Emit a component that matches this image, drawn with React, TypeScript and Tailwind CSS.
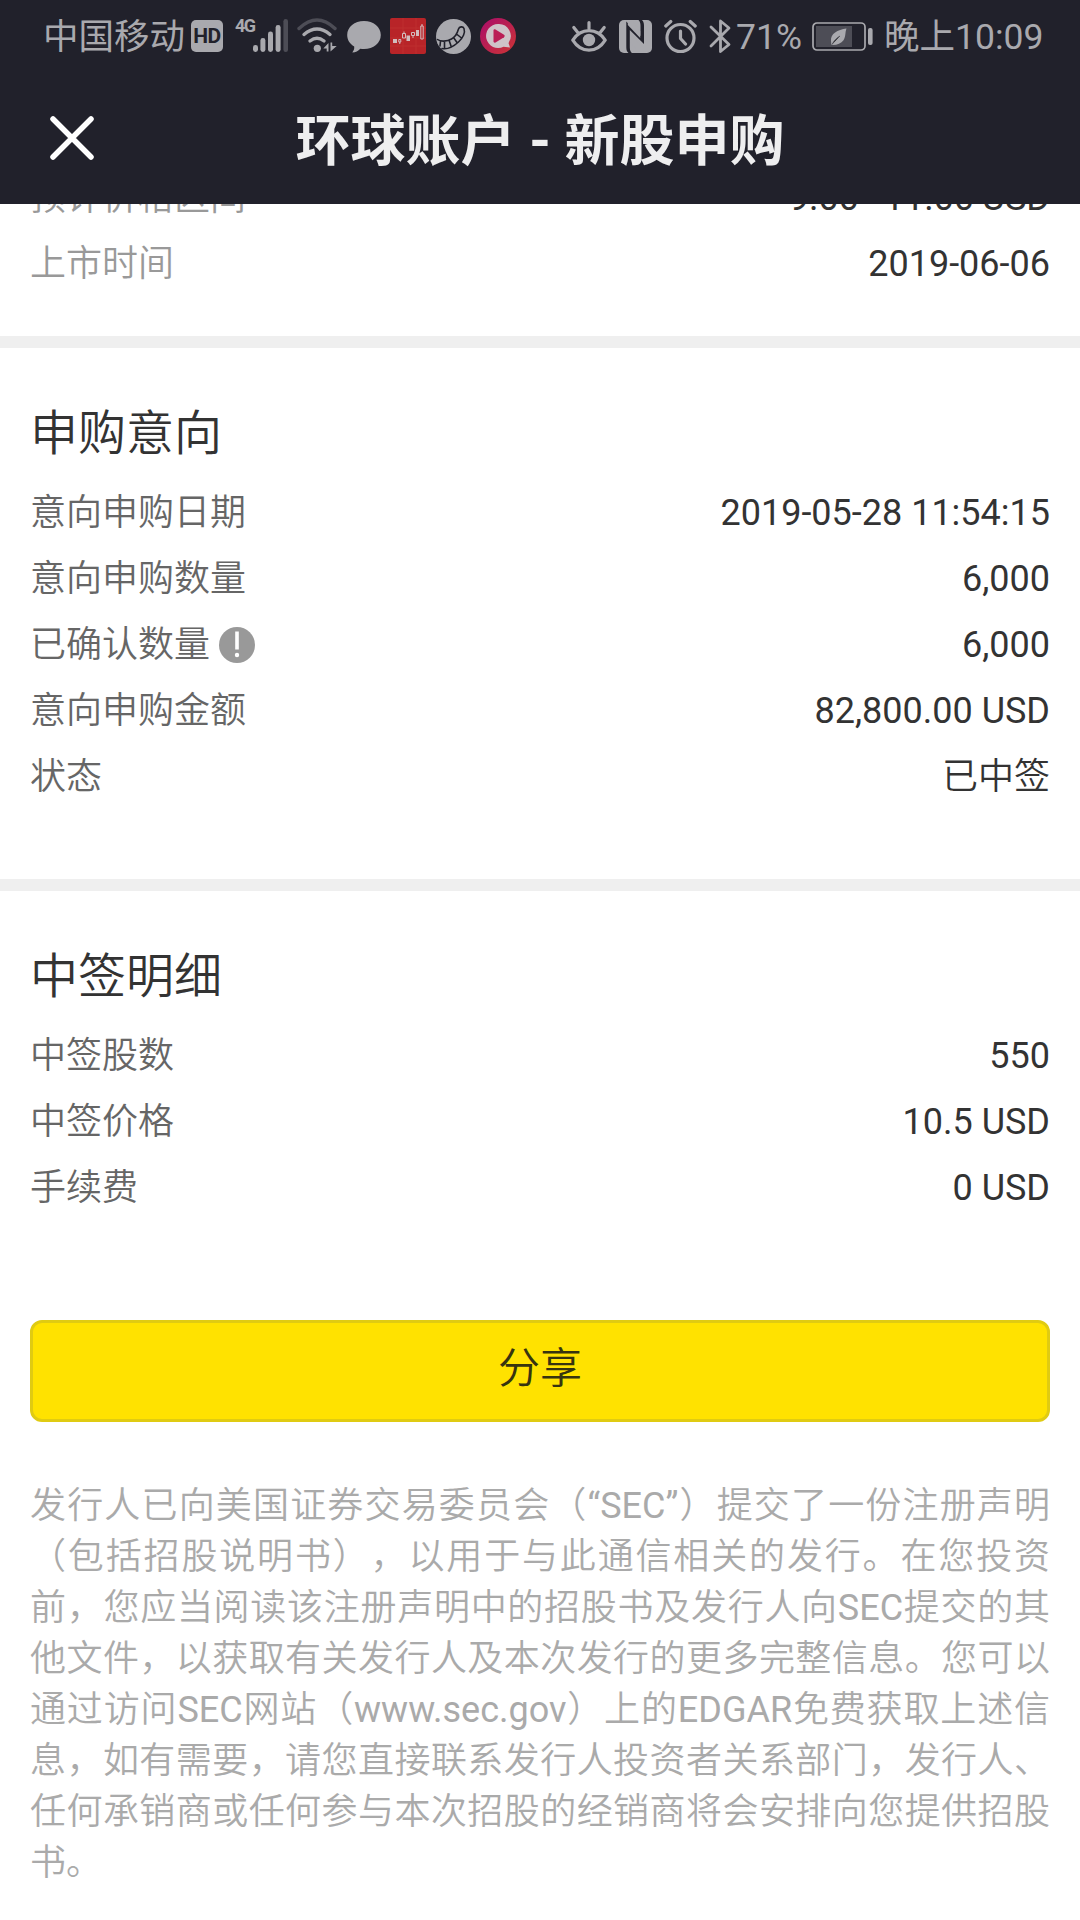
import { clsx } from "clsx";
import type { ReactNode } from "react";

// ── Status bar icons ──────────────────────────────────────────────
function HdIcon() {
  return (
    <div className="ml-1 flex h-8 w-8 items-center justify-center rounded-[5px] bg-[#a9a9ae] text-[21px] leading-none font-bold tracking-[-0.5px] text-[#21212b]">
      HD
    </div>
  );
}

function SignalIcon() {
  return (
    <svg className="h-9 w-[36px]" viewBox="0 0 36 36" fill="#a9a9ae">
      <rect x="0" y="27" width="5" height="7" rx="2.4" />
      <rect x="7.4" y="20" width="5" height="14" rx="2.4" />
      <rect x="15" y="13.5" width="5" height="20.5" rx="2.4" />
      <rect x="22.6" y="7" width="5" height="27" rx="2.4" />
      <rect x="30.4" y="1" width="4.6" height="33" rx="2.3" fill="#4d4d56" />
    </svg>
  );
}

function WifiIcon() {
  return (
    <svg className="ml-2 h-9 w-[40px]" viewBox="0 0 40 36" fill="none" strokeWidth="3.4" strokeLinecap="round">
      <path d="M2 10.5Q20 -6.500 38 10.500" stroke="#4d4d56" />
      <path d="M7 16.500Q20 5.500 33 16.500M13 23Q20 17.500 27 23" stroke="#a9a9ae" />
      <circle cx="20.300" cy="30.300" r="3.600" fill="#a9a9ae" />
      <path d="M31.500 25v8.500h-1.800v-3h-3.400zM33.500 33.500v-9h1.700v3.500h4.500z" fill="#a9a9ae" />
    </svg>
  );
}

function ChatIcon() {
  return (
    <svg className="ml-2.5 h-9 w-[34px]" viewBox="0 0 34 36" fill="#a9a9ae">
      <path d="M17 3C7.500 3 .2 9 .2 17c0 5 2.700 9 7 11.500.3 2.500-.5 4-1.900 6 3.500 0 5.800-1.700 8-3.800 1.200.2 2.400.3 3.700.3 9.500 0 16.800-6 16.800-14S26.500 3 17 3Z" />
    </svg>
  );
}

function StockAppIcon() {
  return (
    <svg className="ml-[9px] h-9 w-9" viewBox="0 0 36 36">
      <rect width="36" height="36" rx="2" fill="#b82428" />
      <path d="M0 10h36M0 20h36M0 28h36M13 0v36M26 0v36" stroke="#c03431" strokeWidth=".7" />
      <g fill="#d2bcbd" stroke="#d2bcbd">
        <rect x="3.500" y="21.500" width="3" height="3" />
        <path d="M8.800 21.500h2v2.500h-2zM9.800 24v2" fill="none" />
        <path d="M12.500 15.500h3v4.500h-3zM14 13.500v2" fill="none" />
        <rect x="17" y="18" width="2.500" height="4.500" />
        <path d="M21.500 14.500h3v3h-3zM23 17.500v2.500" fill="none" />
        <rect x="26.500" y="12.500" width="2" height="5" />
        <path d="M30.800 8h2.400v13h-2.400zM32 6v2" fill="none" />
      </g>
    </svg>
  );
}

function BallIcon() {
  return (
    <svg className="ml-2.5 h-9 w-[35px]" viewBox="0 0 35 36">
      <circle cx="17.500" cy="18.500" r="17.500" fill="#a9a9ae" />
      <path
        d="M1.500 21.500c3 2.500 9.500 2 14-.5 4.500-2.500 6-6.500 7-10 .8-2.500 4.500-3 5.500-.5 1.500 4-1 9.500-5.500 13.500C17 29 11 31.500 6 30.500M20.500 16l5 4M17.500 19.500l3.500 5M13 22l2 6M8.500 23v7M4.500 23l-.5 5"
        fill="none"
        stroke="#21212b"
        strokeWidth="1.600"
        strokeLinecap="round"
        strokeLinejoin="round"
      />
    </svg>
  );
}

function PlayAppIcon() {
  return (
    <svg className="ml-[9px] h-9 w-9" viewBox="0 0 36 36">
      <defs>
        <linearGradient id="play" x1="0" y1="0" x2="1" y2="1">
          <stop offset="0" stopColor="#aa0d6b" />
          <stop offset="1" stopColor="#cc3534" />
        </linearGradient>
      </defs>
      <circle cx="18" cy="18" r="18" fill="url(#play)" />
      <path d="M18 6a12 12 0 1 0 5.500 22.700L30 29.500 28.500 25A12 12 0 0 0 18 6Z" fill="#cfc3c8" />
      <path d="M13.500 12.500c0-1 1-1.500 2-1l8.500 5.300c.9.600.9 1.800 0 2.400l-8.500 5.300c-1 .5-2 0-2-1z" fill="#bb1d55" />
    </svg>
  );
}

function EyeIcon() {
  return (
    <svg className="h-9 w-9" viewBox="0 0 36 36" fill="none" stroke="#a9a9ae" strokeWidth="3.200" strokeLinecap="round">
      <path d="M1.800 22.200C10 9.500 26 9.500 34.200 22.200 26 35.500 10 35.500 1.800 22.200Z" strokeLinejoin="round" />
      <circle cx="18" cy="22" r="6.200" fill="#a9a9ae" stroke="none" />
      <path d="M18 4.500v6M2.800 9.500l4 5M33.200 9.500l-4 5" />
    </svg>
  );
}

function NfcIcon() {
  return (
    <svg className="ml-3 h-9 w-[33px]" viewBox="0 0 33 36">
      <rect y="2" width="33" height="33" rx="5" fill="#a9a9ae" />
      <path d="M9.500 35C7.300 33 7.300 31 7.300 28V3.500L21.500 18V9c0-3 0-5-2-7h3.500c2 2 2 4 2 7v17L10.800 12v16c0 3 0 5 2 7z" fill="#21212b" />
      <path d="M8.800 2h4.500L21.200 13v7L8.800 7z" fill="#a9a9ae" />
      <path d="M11.500 16.500L24.500 30v5h-4.500L11.500 24z" fill="#a9a9ae" />
    </svg>
  );
}

function AlarmIcon() {
  return (
    <svg className="ml-3 h-9 w-[33px]" viewBox="0 0 33 36" fill="none" stroke="#a9a9ae" strokeWidth="3.200" strokeLinecap="round" strokeLinejoin="round">
      <circle cx="16.500" cy="20" r="13.500" />
      <path d="M16.500 13v7.500l5 5.500M1.800 8l5-4.500M31.200 8l-5-4.500" />
    </svg>
  );
}

function BluetoothIcon() {
  return (
    <svg className="ml-[12px] h-9 w-[22px]" viewBox="0 0 22 36" fill="none" stroke="#a9a9ae" strokeWidth="2.800" strokeLinecap="round" strokeLinejoin="round">
      <path d="M2 9l18 17.500-8.500 7V3l8.500 7L2 28" />
    </svg>
  );
}

function BatteryIcon() {
  return (
    <svg className="ml-[10px] h-9 w-[62px]" viewBox="0 0 62 36">
      <rect x="1" y="5" width="52" height="27" rx="4" fill="none" stroke="#a9a9ae" strokeWidth="1.700" />
      <rect x="4" y="8" width="36" height="21" fill="#4d4d56" />
      <rect x="56" y="10" width="4.600" height="17" rx="2" fill="#a9a9ae" />
      <path d="M34.500 10.500c-9 1-16 5.500-15.500 12l.3 4.200 1.500.300c4.500-.200 8.500-1.500 10.700-4.800 2.500-3.700 1.500-8 3-11.700Z" fill="#a9a9ae" />
      <path d="M20 26.500c2-4 5-6.500 8-8.500" stroke="#4d4d56" strokeWidth=".9" />
    </svg>
  );
}

function StatusBar() {
  return (
    <div className="flex h-[72px] items-center pl-[43px] text-[35.5px] leading-none text-[#a9a9ae]">
      <span className="w-36 pt-1">中国移动</span>
      <HdIcon />
      <span className="-mt-5 ml-3 w-[18px] text-[18px] font-bold tracking-[-1.5px]">4G</span>
      <SignalIcon />
      <WifiIcon />
      <ChatIcon />
      <StockAppIcon />
      <BallIcon />
      <PlayAppIcon />
      <div className="w-[55px]" />
      <EyeIcon />
      <NfcIcon />
      <AlarmIcon />
      <BluetoothIcon />
      <span className="ml-[5px] w-[66px] pt-1">71%</span>
      <BatteryIcon />
      <span className="ml-[10px] pt-1 whitespace-nowrap">晚上10:09</span>
    </div>
  );
}

// ── Title bar ─────────────────────────────────────────────────────
function TitleBar() {
  return (
    <div className="grid h-[132px] grid-cols-[120px_1fr_120px] items-center">
      <svg className="ml-[50px] h-11 w-11" viewBox="0 0 44 44" stroke="#fff" strokeWidth="5.5" strokeLinecap="round">
        <path d="M3 3l38 38M41 3L3 41" />
      </svg>
      <h1 className="pt-1.5 text-center text-[55px] leading-none font-bold text-[#eeeeef]">环球账户 - 新股申购</h1>
    </div>
  );
}

// ── Detail rows ───────────────────────────────────────────────────
interface RowProps {
  label: string;
  value: string;
  muted?: boolean;
  icon?: ReactNode;
}

function Row({ label, value, muted = false, icon }: RowProps) {
  return (
    <div className="flex h-[66px] items-center justify-between">
      <span className={clsx("flex items-center", muted ? "text-[#999999]" : "text-[#666666]")}>
        {label}
        {icon}
      </span>
      <span className={clsx("text-[#333333]", muted && "[word-spacing:-1.5px]")}>{value}</span>
    </div>
  );
}

function InfoIcon() {
  return (
    <svg className="ml-[9px] h-9 w-9" viewBox="0 0 36 36">
      <circle cx="18" cy="18" r="18" fill="#999" />
      <path d="M18 4.500v18" stroke="#fff" strokeWidth="3.600" />
      <circle cx="18" cy="28" r="2.200" fill="#fff" />
    </svg>
  );
}

interface SectionProps {
  title: string;
  className?: string;
  children: ReactNode;
}

function Section({ title, className, children }: SectionProps) {
  return (
    <section className={clsx("border-t-[12px] border-[#efefef] px-[30px] pt-[50px]", className)}>
      <h2 className="mb-2.5 h-[72px] text-[48px] leading-[72px] text-[#333333]">{title}</h2>
      {children}
    </section>
  );
}

const disclaimer = [
  "发行人已向美国证券交易委员会（“SEC”）提交了一份注册声明",
  "（包括招股说明书），以用于与此通信相关的发行。在您投资",
  "前，您应当阅读该注册声明中的招股书及发行人向SEC提交的其",
  "他文件，以获取有关发行人及本次发行的更多完整信息。您可以",
  "通过访问SEC网站（www.sec.gov）上的EDGAR免费获取上述信",
  "息，如有需要，请您直接联系发行人投资者关系部门，发行人、",
  "任何承销商或任何参与本次招股的经销商将会安排向您提供招股",
  "书。",
];

export default function App() {
  return (
    <div
      lang="zh-CN"
      className="flex h-[1920px] w-[1080px] flex-col overflow-hidden bg-white font-[Roboto,'Noto_Sans_CJK_SC_DemiLight','Noto_Sans_CJK_SC',sans-serif] text-[36px] leading-[54px]"
    >
      <header className="z-10 h-[204px] shrink-0 bg-[#21212b] font-[Roboto,'Noto_Sans_CJK_SC',sans-serif]">
        <StatusBar />
        <TitleBar />
      </header>

      <main>
        <div className="-mt-[39px] h-[171px] px-[30px]">
          <Row muted label="预计价格区间" value="9.00 - 11.00 USD" />
          <Row muted label="上市时间" value="2019-06-06" />
        </div>

        <Section title="申购意向" className="h-[543px]">
          <Row label="意向申购日期" value="2019-05-28 11:54:15" />
          <Row label="意向申购数量" value="6,000" />
          <Row label="已确认数量" value="6,000" icon={<InfoIcon />} />
          <Row label="意向申购金额" value="82,800.00 USD" />
          <Row label="状态" value="已中签" />
        </Section>

        <Section title="中签明细" className="h-[441px]">
          <Row label="中签股数" value="550" />
          <Row label="中签价格" value="10.5 USD" />
          <Row label="手续费" value="0 USD" />
        </Section>

        <div className="px-[30px]">
          <button className="flex h-[102px] w-full items-center justify-center rounded-xl border-[3px] border-[#e0cb12] bg-[#ffe200] pb-1 text-[42px] text-[#37340f]">
            分享
          </button>
          <div className="mt-[59px] leading-[51px] text-[#aaaaaa]">
            {disclaimer.map((line, i) => (
              <p
                key={line}
                className={clsx(
                  "h-[51px] whitespace-nowrap [text-spacing-trim:space-all]",
                  i < disclaimer.length - 1 && "[text-align-last:justify] [text-justify:inter-character]"
                )}
              >
                {line}
              </p>
            ))}
          </div>
        </div>
      </main>
    </div>
  );
}
